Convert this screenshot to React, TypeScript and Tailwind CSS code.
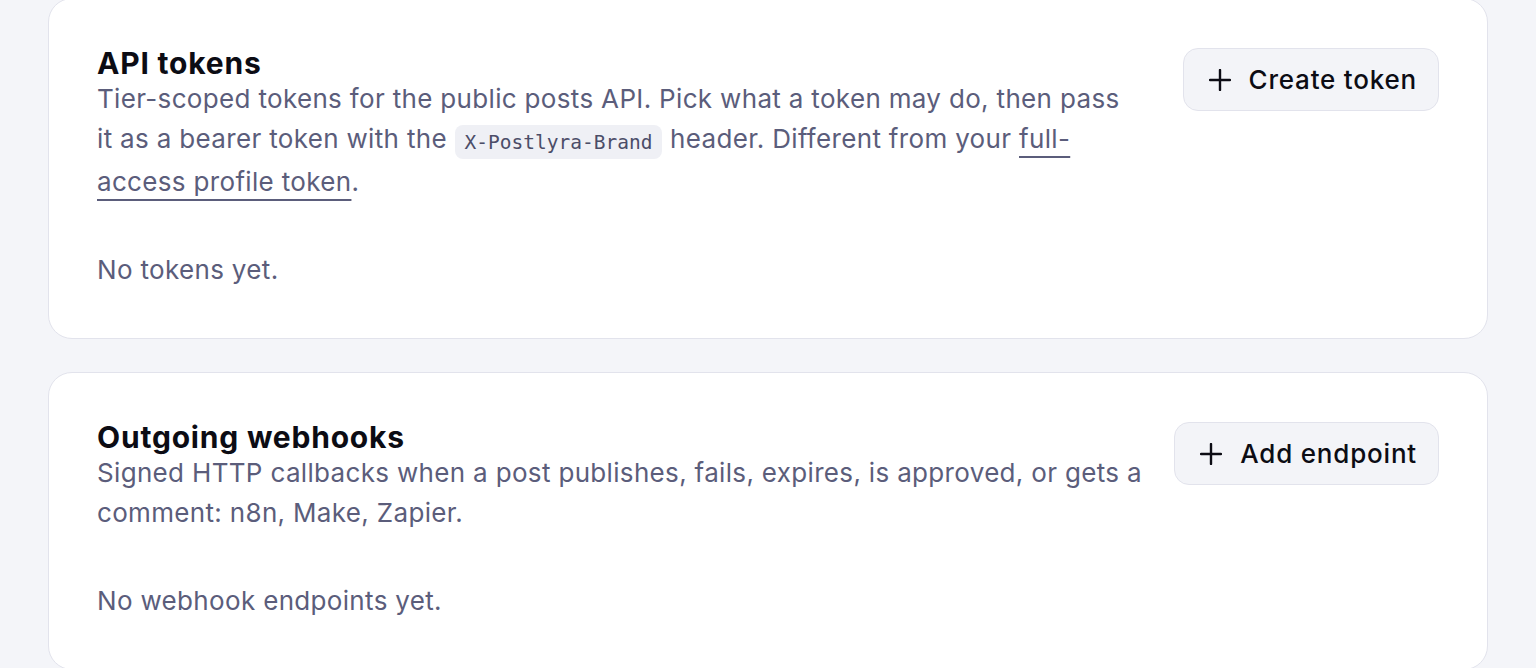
type Section = {
  title: string;
  action: string;
  empty: string;
  body: React.ReactNode;
};

const sections: Section[] = [
  {
    title: "API tokens",
    action: "Create token",
    empty: "No tokens yet.",
    body: (
      <>
        Tier-scoped tokens for the public posts API. Pick what a token may do, then pass
        <br />
        it as a bearer token with the{" "}
        <code className="rounded-lg bg-[#eff0f5] px-[10px] py-[5.5px] font-['DejaVu_Sans_Mono',monospace] text-[19.5px] tracking-normal text-[#4b4d68]">
          X-Postlyra-Brand
        </code>{" "}
        header. Different from your{" "}
        <a className="underline decoration-2 underline-offset-[8px]" href="#">
          full-access profile token
        </a>
        .
      </>
    ),
  },
  {
    title: "Outgoing webhooks",
    action: "Add endpoint",
    empty: "No webhook endpoints yet.",
    body: (
      <>
        Signed HTTP callbacks when a post publishes, fails, expires, is approved, or gets a
        comment: n8n, Make, Zapier.
      </>
    ),
  },
];

function PlusIcon() {
  return (
    <svg width="22" height="22" viewBox="0 0 22 22" fill="none" stroke="currentColor" strokeWidth="2.4" strokeLinecap="round">
      <path d="M11 1v20M1 11h20" />
    </svg>
  );
}

function Card({ section }: { section: Section }) {
  return (
    <section className="rounded-3xl border border-[#e2e3ec] bg-white p-12">
      <div className="flex items-start gap-8">
        <div className="min-w-0 flex-1">
          <h2 className="text-[30px] leading-8 font-bold tracking-[0.8px] text-[#0c0c14]">{section.title}</h2>
          <p className="text-[26px] leading-10 tracking-[0.33px] text-[#5b5d7b]">{section.body}</p>
        </div>
        <button className="mt-[1px] flex h-[63px] shrink-0 items-center gap-[18px] rounded-[15px] border border-[#e2e3ec] bg-[#f3f4f8] pr-[21px] pl-[25px] text-[26px] font-medium tracking-[0.8px] text-[#0c0c14]">
          <PlusIcon />
          {section.action}
        </button>
      </div>
      <p className="mt-12 text-[26px] leading-10 tracking-[0.33px] text-[#5b5d7b]">{section.empty}</p>
    </section>
  );
}

export default function App() {
  return (
    <div className="h-[668px] overflow-hidden bg-[#f4f5f9] font-['Inter',sans-serif] [font-optical-sizing:none]">
      <div className="-mt-[2px] flex flex-col gap-[33px] px-12 pb-12">
        {sections.map((s) => (
          <Card key={s.title} section={s} />
        ))}
      </div>
    </div>
  );
}
